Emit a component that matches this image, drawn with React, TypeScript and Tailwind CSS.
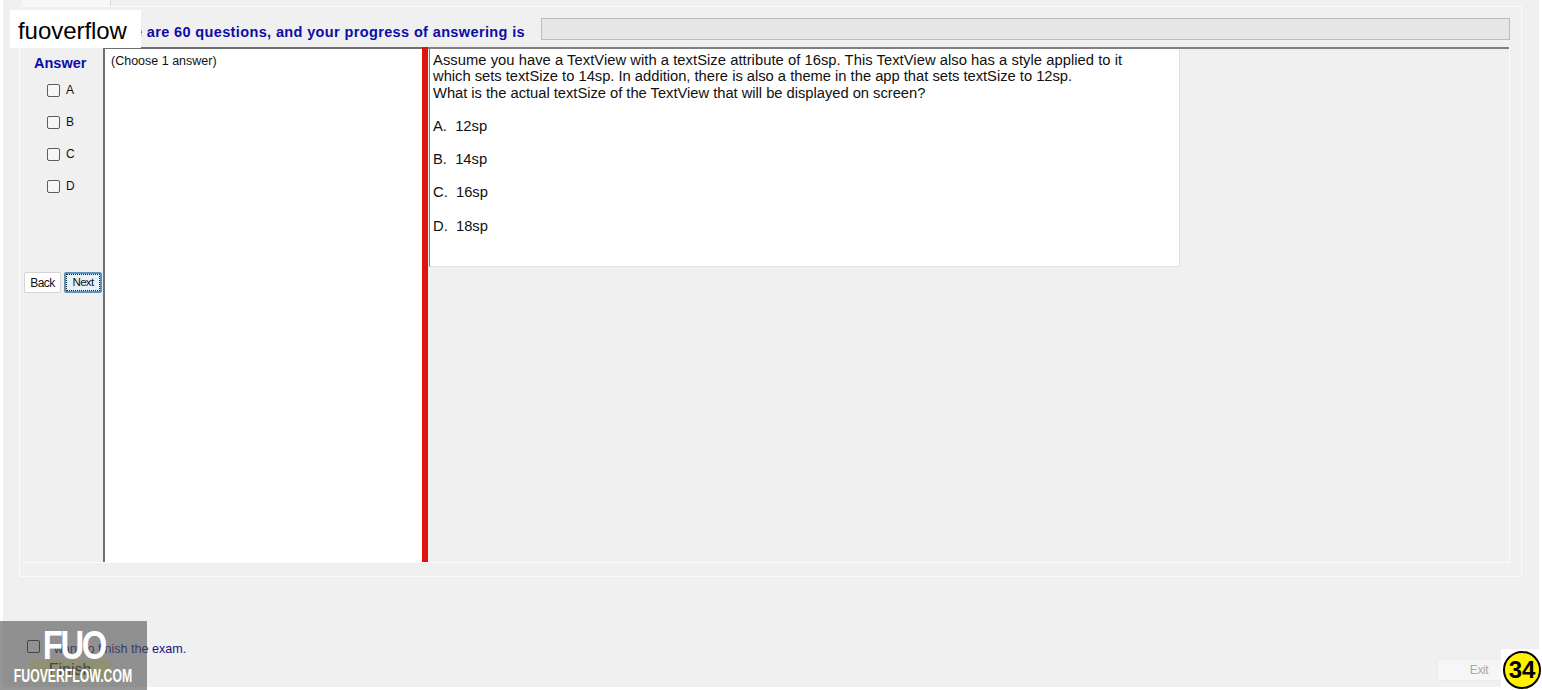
export default function App() {
  const sans = "font-['Liberation_Sans',Arial,sans-serif]";
  return (
    <div className={`relative w-[1542px] h-[690px] overflow-hidden bg-white ${sans}`}>
      <div className="ml-[3px] w-[1536px] h-[687px] bg-[#f0f0f0] flex flex-col pl-[16px] pr-[17px]">
        {/* tab strip */}
        <div className="h-[6px] pl-[3px] shrink-0">
          <div className="w-[89px] h-[6px] bg-[#f8f8f8] border-r border-[#dddddd]" />
        </div>
        {/* tab page */}
        <div className="h-[571px] shrink-0 border border-[#fafafa] pl-[2px] pr-[11px] flex flex-col">
          <div className="h-[40px] shrink-0 flex items-start pl-[79px] pt-[11px]">
            <div className="w-[440px] mt-[6px] font-bold text-[14.5px] leading-[17px] tracking-[0.37px] text-[#0c0ca8] whitespace-nowrap">
              There are 60 questions, and your progress of answering is
            </div>
            <div className="flex-1 h-[22px] bg-[#e6e6e6] border border-[#bcbcbc]" />
          </div>
          <div className="h-[516px] shrink-0 flex border-r border-b border-[#fbfbfb]">
            {/* answer column */}
            <div className="w-[81px] shrink-0 flex flex-col pl-[2px]">
              <div className="pl-[10px] pt-[7px] h-[37px] font-bold text-[14.5px] leading-[18px] text-[#0c0ca8]">Answer</div>
              <div className="flex flex-col gap-[19px] pl-[23px]">
                {["A", "B", "C", "D"].map((l) => (
                  <div key={l} className="flex items-center h-[13px] gap-[6px]">
                    <span className="w-[13px] h-[13px] rounded-[2px] border border-[#5c5c5c] bg-[#f6f6f6]" />
                    <span className="text-[12px] leading-[13px] -mt-[1px] text-[#111111]">{l}</span>
                  </div>
                ))}
              </div>
              <div className="flex gap-[3px] mt-[79px]">
                <button className="w-[37px] h-[21px] bg-white border border-[#d4d4d4] rounded-[2px] text-[12px] tracking-[-0.5px] text-[#111111]">Back</button>
                <button className="w-[38px] h-[21px] bg-[#e6f2fb] border-2 border-[#5b93c0] rounded-[2px] outline-1 outline-dotted -outline-offset-3 outline-[#222222] text-[11.5px] tracking-[-0.7px] text-[#111111]">Next</button>
              </div>
            </div>
            {/* instruction panel */}
            <div className="w-[319px] shrink-0 bg-white border-l-2 border-t-2 border-[#6f6f6f] pl-[6px] pt-[4px] text-[12.5px] leading-[16px] text-[#111111]">
              (Choose 1 answer)
            </div>
            {/* splitter */}
            <div className="w-[6px] shrink-0 bg-[#e01212]" />
            {/* question */}
            <div className="flex-1 border-t-2 border-[#808080] pl-[1px]">
              <div className="w-[751px] h-[218px] bg-white border-l border-[#7a7a7a] border-r border-b border-r-[#e0e0e0] border-b-[#e0e0e0] pl-[3px] pt-[2.75px] text-[14.75px] leading-[16.5px] text-[#111111]">
                <p className="whitespace-nowrap tracking-[0.04px]">Assume you have a TextView with a textSize attribute of 16sp. This TextView also has a style applied to it</p>
                <p className="whitespace-nowrap tracking-[-0.02px]">which sets textSize to 14sp. In addition, there is also a theme in the app that sets textSize to 12sp.</p>
                <p className="whitespace-nowrap tracking-[-0.03px]">What is the actual textSize of the TextView that will be displayed on screen?</p>
                <p className="mt-[16.25px]">A.&nbsp; 12sp</p>
                <p className="mt-[16.5px]">B.&nbsp; 14sp</p>
                <p className="mt-[16.5px]">C.&nbsp; 16sp</p>
                <p className="mt-[17.5px]">D.&nbsp; 18sp</p>
              </div>
            </div>
          </div>
        </div>
        {/* footer */}
        <div className="flex-1 relative flex items-start justify-between pl-[8px] pr-[17px] pt-[63px]">
          <div className="flex flex-col">
            <div className="flex items-center gap-[7px] h-[13px]">
              <span className="w-[13px] h-[13px] rounded-[2px] border border-[#333333] bg-[#f6f6f6]" />
              <span className="text-[12.6px] mt-[5px] text-[#14148a] whitespace-nowrap">I want to finish the exam.</span>
            </div>
            <button className="ml-[3px] mt-[7px] w-[80px] h-[20px] bg-[#f1f0a8] text-[16px] leading-[20px] text-[#333333]">Finish</button>
          </div>
          <button className="mt-[19px] w-[68px] h-[22px] pl-[16px] bg-[#f6f6f6] border border-[#ececec] text-[12px] tracking-[-0.4px] text-[#a8a8a8]">Exit</button>
        </div>
      </div>

      {/* overlays */}
      <div className="absolute left-[10px] top-[10px] w-[131px] h-[38px] bg-white pl-[8px] pt-[5px] text-[24px] leading-[32px] tracking-[-0.05px] text-black">
        fuoverflow
      </div>
      <div className="absolute left-0 top-[621px] w-[147px] h-[69px] bg-[#505050]/60 text-white flex flex-col items-center">
        <div className="font-bold text-[41px] leading-[36px] tracking-[-3px] mt-[6px] scale-x-[.8] whitespace-nowrap">FUO</div>
        <div className="font-bold text-[18px] leading-[20px] mt-[3px] -ml-[1px] scale-x-[.68] whitespace-nowrap">FUOVERFLOW.COM</div>
      </div>
      <div className="absolute left-[1501px] top-[649px] w-[41px] h-[41px] bg-white">
        <div className="ml-[2px] mt-[2px] w-[38px] h-[38px] rounded-full bg-[#fff200] border-2 border-black flex items-center justify-center font-bold text-[24px] text-black">
          34
        </div>
      </div>
    </div>
  );
}
